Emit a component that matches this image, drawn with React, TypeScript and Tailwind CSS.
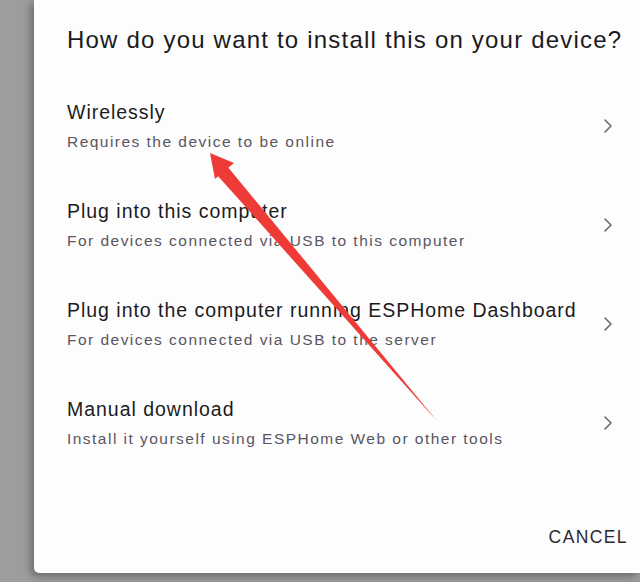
import React from "react";

const options = [
  { title: "Wirelessly", sub: "Requires the device to be online" },
  { title: "Plug into this computer", sub: "For devices connected via USB to this computer" },
  { title: "Plug into the computer running ESPHome Dashboard", sub: "For devices connected via USB to the server" },
  { title: "Manual download", sub: "Install it yourself using ESPHome Web or other tools" },
];

function Chevron() {
  return (
    <svg width="10" height="16" viewBox="0 0 10 16" fill="none">
      <path d="M2 2l6 6-6 6" stroke="#6b6b6b" strokeWidth="1.6" strokeLinecap="round" strokeLinejoin="round" />
    </svg>
  );
}

export default function App() {
  return (
    <div className="relative w-[640px] h-[582px] overflow-hidden bg-[#9c9d9f] font-['Liberation_Sans',Arial,sans-serif]">
      {/* dialog */}
      <div className="ml-[34px] h-[573px] bg-[#fdfdfe] rounded-bl-[5px] shadow-[-3px_3px_8px_rgba(0,0,0,0.35)] flex flex-col">
        <h2 className="pl-[33px] pt-[24px] text-[24px] leading-[32px] tracking-[0.05em] text-[#1b1b1d] whitespace-nowrap">
          How do you want to install this on your device?
        </h2>

        <div className="mt-[43px] flex flex-col">
          {options.map((o) => (
            <div key={o.title} className="h-[99px] pl-[33px] pr-[27px]">
              <div className="flex items-center">
                <div className="flex-1 flex flex-col">
                  <span className="text-[19.5px] leading-[26px] tracking-[0.05em] text-[#1b1b1d] whitespace-nowrap">{o.title}</span>
                  <span className="text-[15.5px] leading-[22px] mt-[6px] tracking-[0.095em] text-[#5a5560] whitespace-nowrap">{o.sub}</span>
                </div>
                <Chevron />
              </div>
            </div>
          ))}
        </div>

        <div className="mt-auto mb-[23px] flex justify-end pr-[12px]">
          <span className="text-[17.5px] tracking-[0.08em] text-[#2a2a2e]">CANCEL</span>
        </div>
      </div>

      {/* red annotation arrow */}
      <svg className="absolute left-0 top-0 pointer-events-none" width="640" height="582" viewBox="0 0 640 582">
        <polygon points="437,421 227,166 217,175" fill="#ee3b37" />
        <polygon points="210,153 234,163 215,179" fill="#ee3b37" />
      </svg>
    </div>
  );
}
